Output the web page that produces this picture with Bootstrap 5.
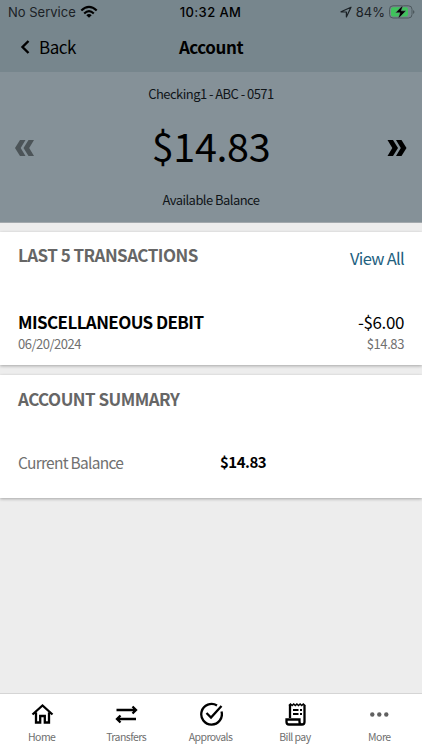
<!DOCTYPE html>
<html lang="en">
<head>
<meta charset="utf-8">
<meta name="viewport" content="width=device-width, initial-scale=1">
<title>Account</title>
<link href="https://cdn.jsdelivr.net/npm/bootstrap@5.3.0/dist/css/bootstrap.min.css" rel="stylesheet">
<style>
body{font-family:"Noto Sans CJK SC","Noto Sans",sans-serif;background:#ededed;color:#000;height:750px;overflow:hidden}
svg{display:block;flex:none}
.top-bar{background:#77868d;height:72px}
.status{height:24px;font-family:Inter,"Liberation Sans",sans-serif;font-size:13px;line-height:24px;color:#1b2125;padding:0 7px 0 8px}
.status .clock{font-weight:500;color:#000;letter-spacing:.4px;margin-left:-2px}
.side{flex:1 1 0}
.title-row{height:48px;line-height:46px;padding:0 20px}
.back{font-size:17px;letter-spacing:-.5px;padding-bottom:2px}
.back span{padding-left:9px}
.page-title{font-size:17px;font-weight:700;letter-spacing:-.45px}
.hero{background:#859198;height:151px;border-bottom:1px solid #a3a9ad;padding:0 15px}
.hero-text{font-size:13px;line-height:20px;letter-spacing:-.55px;color:#101518}
.amount{font-size:39.5px;line-height:48px;letter-spacing:-.35px;margin:17px 0 21px}
.hero svg{margin-top:2px}
.panel{background:#fff;box-shadow:0 1px 3px rgba(0,0,0,.3);padding:0 18px;white-space:nowrap}
.p1{margin-top:9px;height:133px;padding-top:7px}
.p2{margin-top:10px;height:123px;padding-top:12px}
.heading{font-size:17px;line-height:24px;font-weight:700;letter-spacing:-.53px;color:#666}
.view-all{font-size:16.5px;line-height:24px;letter-spacing:-.7px;color:#22617f;padding-top:7px}
.entries{padding-top:40px}
.entry{font-size:17px;line-height:23px;letter-spacing:-.58px}
.entry-sum{letter-spacing:-.4px}
.detail{font-size:13px;line-height:22px;letter-spacing:-.5px;color:#707070}
.text-end .detail{letter-spacing:-.4px}
.label{font-size:15.5px;line-height:24px;letter-spacing:-.72px;color:#707070;width:202px}
.value{font-size:15px;line-height:24px;font-weight:700;letter-spacing:-.5px}
.summary{padding-top:39px}
.tabs{background:#fff;border-top:1px solid #d5d5d5;height:57px}
.tab{flex:1 1 0;font-size:10.5px;line-height:14px;letter-spacing:-.55px;color:#707070;padding:8px 1px 0 0}
.tab svg{margin-bottom:4px}
</style>
</head>
<body class="d-flex flex-column">
<header class="top-bar">
  <div class="status d-flex">
    <div class="side d-flex align-items-center"><span>No Service</span>
      <svg class="ms-1" width="18" height="14" viewBox="0 0 18 14" fill="none" stroke="#000" stroke-width="2.1"><path d="M1.3 5.5Q9-1.8 16.7 5.5M4.2 8.5Q9 3.9 13.800 8.5"/><path d="M9 12.800L6.300 10.200Q9 7.900 11.700 10.200Z" fill="#000" stroke="none"/></svg>
    </div>
    <span class="clock">10:32 AM</span>
    <div class="side d-flex align-items-center justify-content-end">
      <svg width="12" height="12" viewBox="0 0 12 12" fill="none" stroke="#1b2125" stroke-width="1.2" stroke-linejoin="round"><path d="M1 5.800L11 1.200L6.400 11V6Z"/></svg>
      <span class="mx-1 me-0">84%</span>
      <svg class="ms-1" width="26" height="14" viewBox="0 0 26 14"><rect x=".5" y=".8" width="22.5" height="12.2" rx="3.5" fill="none" stroke="#4d585d"/><rect x="2" y="2.3" width="17" height="9.2" rx="2" fill="#3fc35c"/><path d="M24 5v4q1.500-.8 1.500-2t-1.500-2" fill="#4d585d"/><path d="M14 0L6.500 7.800H11L9 14L17 5.800H12.300Z" fill="#000" stroke="#77868d" stroke-width=".5"/></svg>
    </div>
  </div>
  <div class="title-row d-flex">
    <div class="side d-flex align-items-center back"><svg width="10" height="14" viewBox="0 0 10 14" fill="none" stroke="#000" stroke-width="2.4"><path d="M8.500 1L2.500 7L8.500 13"/></svg><span>Back</span></div>
    <span class="page-title">Account</span>
    <div class="side"></div>
  </div>
</header>
<section class="hero d-flex align-items-center justify-content-between">
  <svg width="20" height="16" viewBox="0 0 20 16" fill="#4c5458"><path d="M5 0H10.500L5.700 8L10.500 16H5L0 8ZM13.500 0H19L14.200 8L19 16H13.500L8.500 8Z"/></svg>
  <div class="text-center">
    <div class="hero-text">Checking1 - ABC - 0571</div>
    <div class="amount">$14.83</div>
    <div class="hero-text">Available Balance</div>
  </div>
  <svg width="20" height="16" viewBox="0 0 20 16" fill="#000"><path d="M.5 0H6L11 8L6 16H.5L5.300 8ZM9 0H14.500L19.500 8L14.500 16H9L13.800 8Z"/></svg>
</section>
<main class="flex-grow-1">
  <section class="panel p1">
    <div class="d-flex justify-content-between"><span class="heading pt-1">LAST 5 TRANSACTIONS</span><span class="view-all">View All</span></div>
    <div class="entries d-flex justify-content-between align-items-end">
      <div><div class="entry fw-bold">MISCELLANEOUS DEBIT</div><div class="detail">06/20/2024</div></div>
      <div class="text-end"><div class="entry entry-sum">-$6.00</div><div class="detail">$14.83</div></div>
    </div>
  </section>
  <section class="panel p2">
    <div class="heading">ACCOUNT SUMMARY</div>
    <div class="summary d-flex"><span class="label">Current Balance</span><span class="value">$14.83</span></div>
  </section>
</main>
<nav class="tabs d-flex text-center">
  <div class="tab d-flex flex-column align-items-center"><svg width="24" height="24" viewBox="0 0 24 24" fill="none" stroke="#000" stroke-width="2.3"><path d="M2.500 12.500L12.500 3.500L22.500 12.500M6 10.500V20.500H10.200V14H14.800V20.500H19V10.500"/></svg>Home</div>
  <div class="tab d-flex flex-column align-items-center"><svg width="24" height="24" viewBox="0 0 24 24" fill="none" stroke="#000" stroke-width="2.3"><path d="M2.500 8H22M18.500 4.500L22 8L18.500 11.500M22 17H3M6.500 13.500L3 17L6.500 20.500"/></svg>Transfers</div>
  <div class="tab d-flex flex-column align-items-center"><svg width="24" height="24" viewBox="0 0 24 24" fill="none" stroke="#000" stroke-width="2.3"><path d="M18 3.500A10.300 10.300 0 1 0 22.500 9.500M7.500 11L12 15.500L22.500 4"/></svg>Approvals</div>
  <div class="tab d-flex flex-column align-items-center"><svg width="24" height="24" viewBox="0 0 24 24" fill="none" stroke="#000" stroke-width="2.3"><path d="M7 16V3M21.500 3V20Q21.500 22.500 19 22.500H6Q3.500 22.500 3.500 20V17.500H16.500V20Q16.500 22.500 19 22.500"/><path d="M10 8H15.500M10 12H15.500M17 8H19M17 12H19" stroke-width="2"/><path d="M6 3.500L7.500 2L9.100 3.500L10.700 2L12.300 3.500L13.900 2L15.500 3.500L17.100 2L18.700 3.500L20.300 2L22 3.500" stroke-width="1.6"/></svg>Bill pay</div>
  <div class="tab d-flex flex-column align-items-center"><svg width="24" height="24" viewBox="0 0 24 24" fill="#606060"><circle cx="5.300" cy="12.500" r="2.200"/><circle cx="12.300" cy="12.500" r="2.200"/><circle cx="19.300" cy="12.500" r="2.200"/></svg>More</div>
</nav>
<script src="https://cdn.jsdelivr.net/npm/bootstrap@5.3.0/dist/js/bootstrap.bundle.min.js"></script>
</body>
</html>
